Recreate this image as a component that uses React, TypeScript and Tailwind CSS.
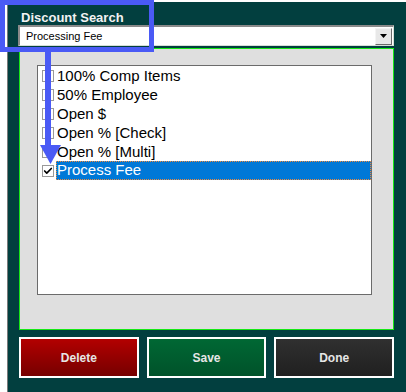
import { Check } from "lucide-react";

// ─── Data ───────────────────────────────────────────

const DISCOUNTS = [
  { id: 1, name: "100% Comp Items", checked: false },
  { id: 2, name: "50% Employee", checked: false },
  { id: 3, name: "Open $", checked: false },
  { id: 4, name: "Open % [Check]", checked: false },
  { id: 5, name: "Open % [Multi]", checked: false },
  { id: 6, name: "Process Fee", checked: true },
];

const BUTTONS = [
  { label: "Delete", cls: "bg-gradient-to-b from-[#b30000] to-[#760000]" },
  { label: "Save", cls: "bg-gradient-to-b from-[#006834] to-[#00522a]" },
  { label: "Done", cls: "bg-gradient-to-b from-[#303030] to-[#202020]" },
];

// ─── Component ──────────────────────────────────────

export default function App() {
  return (
    <div className="relative h-[392px] w-[406px] overflow-hidden bg-white pl-[7px] pt-[2px] font-['Liberation_Sans',Arial,sans-serif]">
      <div className="flex h-[390px] flex-col border-l border-[#7a7a7a] bg-[#023f3f] pl-[11px] pr-[12px]">
        <div className="mt-[8px] ml-[2px] h-[15px] text-[13px] font-bold leading-[15px] text-[#f2f2f2]">
          Discount Search
        </div>

        {/* Dropdown */}
        <div className="-ml-px flex h-[21px] items-center border-t-2 border-l-2 border-t-[#8a8a8a] border-l-[#8a8a8a] border-b border-r border-b-[#d6ded6] border-r-[#d6ded6] bg-white">
          <span className="flex-1 pl-[6px] text-[11px] leading-none text-black">Processing Fee</span>
          <div className="mr-px flex h-[17px] w-[17px] items-center justify-center border border-t-[#f4f4f4] border-l-[#f4f4f4] border-b-[#6a6a6a] border-r-[#6a6a6a] bg-[#e8e8e8]">
            <svg width="7" height="4" viewBox="0 0 7 4">
              <path d="M0 0h7L3.5 4z" fill="#000" />
            </svg>
          </div>
        </div>

        {/* Gray panel */}
        <div className="mt-[2px] h-[282px] border border-[#16e816] bg-[#dfdfdf] pl-[17px] pr-[21px] pt-[16px]">
          <div className="h-[230px] border border-[#6b6b6b] bg-white">
            {DISCOUNTS.map((d) => (
              <div key={d.id} className="flex h-[19px] items-center">
                <div className="ml-[4px] flex h-[12px] w-[12px] items-center justify-center border border-[#9a9a9a] bg-white">
                  {d.checked && <Check className="h-[10px] w-[10px] text-black" strokeWidth={4} />}
                </div>
                <div
                  className={
                    d.checked
                      ? "ml-[2px] flex h-[19px] flex-1 items-center border border-dotted border-[#f08a3c] bg-[#0078d7] text-[15px] text-white"
                      : "ml-[3px] text-[15px] leading-[19px] text-black"
                  }
                >
                  {d.name}
                </div>
              </div>
            ))}
          </div>
        </div>

        {/* Buttons */}
        <div className="mt-[7px] flex gap-[8px]">
          {BUTTONS.map((b) => (
            <button
              key={b.label}
              className={`flex h-[41px] w-[120px] items-center justify-center border-2 border-white text-[12px] font-bold text-[#e6e6e6] ${b.cls}`}
            >
              {b.label}
            </button>
          ))}
        </div>
      </div>

      {/* Annotation overlay */}
      <div className="absolute left-0 top-0 h-[52px] w-[154px] border-[5px] border-[#4a5af5]" />
      <div className="absolute left-[45px] top-[52px] h-[94px] w-[6px] bg-[#4a5af5]" />
      <svg className="absolute left-[40px] top-[145px]" width="21" height="19" viewBox="0 0 21 19">
        <path d="M0 0h21L10.5 19z" fill="#4a5af5" />
      </svg>
    </div>
  );
}
